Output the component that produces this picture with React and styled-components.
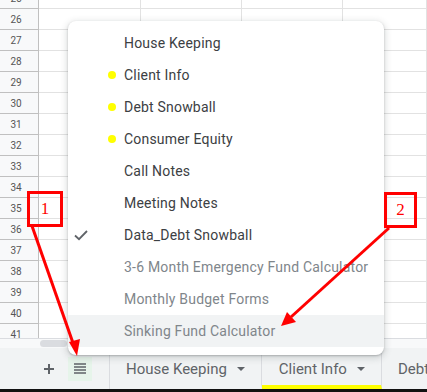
import React from 'react';
import styled, { createGlobalStyle } from 'styled-components';

const GlobalStyle = createGlobalStyle`
  body {
    margin: 0;
    font-family: Roboto, 'Liberation Sans', sans-serif;
    background: #fff;
  }
`;

const Screen = styled.div`
  position: relative;
  width: 427px;
  height: 392px;
  overflow: hidden;
  display: flex;
  flex-direction: column;
`;

const GridArea = styled.div`
  height: 338px;
  overflow: hidden;
  flex-shrink: 0;
`;

const GridInner = styled.div`
  margin-top: -12px;
`;

const Row = styled.div`
  display: grid;
  grid-template-columns: 39px 102px 101px 101px 1fr;
  height: 21px;
`;

const RowHead = styled.div`
  box-sizing: border-box;
  background: #f8f9fa;
  border-right: 1px solid #c0c0c0;
  border-bottom: 1px solid #c0c0c0;
  color: #555;
  font-size: 10px;
  display: flex;
  align-items: center;
  justify-content: center;
  padding-right: 6px;
`;

const Cell = styled.div`
  box-sizing: border-box;
  border-right: 1px solid #e2e2e2;
  border-bottom: 1px solid #e2e2e2;
`;

const ScrollStrip = styled.div`
  box-sizing: border-box;
  height: 10px;
  background: #f8f9fa;
  border-top: 1px solid #dadce0;
  padding: 1px 0 0 40px;
  flex-shrink: 0;
`;

const Thumb = styled.div`
  width: 27px;
  height: 7px;
  border-radius: 4px;
  background: #dadce0;
`;

const SheetBar = styled.div`
  height: 41px;
  background: #f1f3f4;
  display: flex;
  align-items: stretch;
  flex-shrink: 0;
`;

const Tools = styled.div`
  display: flex;
  align-items: center;
  gap: 7px;
  padding-left: 37px;
  width: 72px;
  flex-shrink: 0;
`;

const IconButton = styled.div`
  width: 24px;
  height: 24px;
  display: flex;
  align-items: center;
  justify-content: center;
  background: ${p => (p.$active ? '#e6f4ea' : 'transparent')};
`;

const Tabs = styled.div`
  display: flex;
  flex-shrink: 0;
  border-left: 1px solid #dadce0;
`;

const Tab = styled.div`
  display: flex;
  align-items: center;
  flex-shrink: 0;
  padding: 4px 16px 0 ${p => p.$padLeft}px;
  border-right: 1px solid #dadce0;
  border-bottom: 4px solid ${p => p.$color || 'transparent'};
  color: #5f6368;
  font-size: 15px;
  white-space: nowrap;
`;

const Caret = styled.span`
  margin-left: 10px;
  width: 0;
  height: 0;
  border-left: 4px solid transparent;
  border-right: 4px solid transparent;
  border-top: 4px solid #5f6368;
`;

const BottomEdge = styled.div`
  height: 3px;
  background: #111;
  flex-shrink: 0;
`;

const Menu = styled.div`
  position: absolute;
  left: 68px;
  top: 21px;
  width: 316px;
  box-sizing: border-box;
  padding: 6px 0 8px;
  background: #fff;
  border-radius: 8px;
  box-shadow: 0 1px 2px rgba(60, 64, 67, 0.3), 0 2px 6px 2px rgba(60, 64, 67, 0.15);
`;

const MenuItem = styled.div`
  display: flex;
  align-items: center;
  height: 32px;
  background: ${p => (p.$hover ? '#f1f3f4' : 'transparent')};
  color: ${p => (p.$hidden ? '#80868b' : '#3c4043')};
  font-size: 14px;
  letter-spacing: 0.2px;
  white-space: nowrap;
`;

const Marker = styled.div`
  width: 56px;
  display: flex;
  align-items: center;
  justify-content: ${p => (p.$check ? 'flex-start' : 'flex-end')};
  padding: ${p => (p.$check ? '0 0 0 6px' : '0 8px 0 0')};
  box-sizing: border-box;
`;

const Dot = styled.span`
  width: 8px;
  height: 8px;
  border-radius: 50%;
  background: #ffff00;
`;

const Callout = styled.div`
  position: absolute;
  left: ${p => p.$x}px;
  top: ${p => p.$y}px;
  width: ${p => p.$w}px;
  height: 36px;
  box-sizing: border-box;
  border: 3px solid #ff0000;
  color: #ff0000;
  font-family: 'Liberation Serif', serif;
  font-size: 17px;
  display: flex;
  align-items: center;
  justify-content: center;
`;

const Arrows = styled.svg`
  position: absolute;
  left: 0;
  top: 0;
  pointer-events: none;
`;

const rows = Array.from({ length: 17 }, (_, i) => 25 + i);

const items = [
  { name: 'House Keeping' },
  { name: 'Client Info', dot: true },
  { name: 'Debt Snowball', dot: true },
  { name: 'Consumer Equity', dot: true },
  { name: 'Call Notes' },
  { name: 'Meeting Notes' },
  { name: 'Data_Debt Snowball', check: true },
  { name: '3-6 Month Emergency Fund Calculator', hidden: true },
  { name: 'Monthly Budget Forms', hidden: true },
  { name: 'Sinking Fund Calculator', hidden: true, hover: true },
];

const CheckIcon = () => (
  <svg width="14" height="12" viewBox="0 0 14 12">
    <path d="M1 6.5 L5 10.2 L13 2" fill="none" stroke="#5f6368" strokeWidth="1.8" />
  </svg>
);

const PlusIcon = () => (
  <svg width="12" height="12" viewBox="0 0 12 12">
    <path d="M6 1 V11 M1 6 H11" stroke="#5f6368" strokeWidth="2" />
  </svg>
);

const ListIcon = () => (
  <svg width="12" height="11" viewBox="0 0 12 11">
    <path d="M0 1 H12 M0 4 H12 M0 7 H12 M0 10 H12" stroke="#5f6368" strokeWidth="1.6" />
  </svg>
);

export default function App() {
  return (
    <Screen>
      <GlobalStyle />
      <GridArea>
        <GridInner>
          {rows.map(n => (
            <Row key={n}>
              <RowHead>{n}</RowHead>
              <Cell />
              <Cell />
              <Cell />
              <Cell />
            </Row>
          ))}
        </GridInner>
      </GridArea>
      <ScrollStrip>
        <Thumb />
      </ScrollStrip>
      <SheetBar>
        <Tools>
          <IconButton><PlusIcon /></IconButton>
          <IconButton $active><ListIcon /></IconButton>
        </Tools>
        <Tabs>
          <Tab $padLeft={16}>House Keeping<Caret /></Tab>
          <Tab $padLeft={17} $color="#ffff00">Client Info<Caret /></Tab>
          <Tab $padLeft={16}>Debt Snowball<Caret /></Tab>
        </Tabs>
      </SheetBar>
      <BottomEdge />

      <Menu>
        {items.map(it => (
          <MenuItem key={it.name} $hidden={it.hidden} $hover={it.hover}>
            <Marker $check={it.check}>
              {it.dot && <Dot />}
              {it.check && <CheckIcon />}
            </Marker>
            {it.name}
          </MenuItem>
        ))}
      </Menu>

      <Callout $x={27} $y={191} $w={36}>1</Callout>
      <Callout $x={384} $y={192} $w={33}>2</Callout>

      <Arrows width="427" height="392" viewBox="0 0 427 392">
        <line x1="32" y1="226" x2="73" y2="343" stroke="#ff0000" strokeWidth="3" />
        <polygon points="77,356 69,342 80,339" fill="#ff0000" />
        <line x1="389" y1="228" x2="291" y2="317" stroke="#ff0000" strokeWidth="3" />
        <polygon points="281,326 287,312 296,322" fill="#ff0000" />
      </Arrows>
    </Screen>
  );
}
